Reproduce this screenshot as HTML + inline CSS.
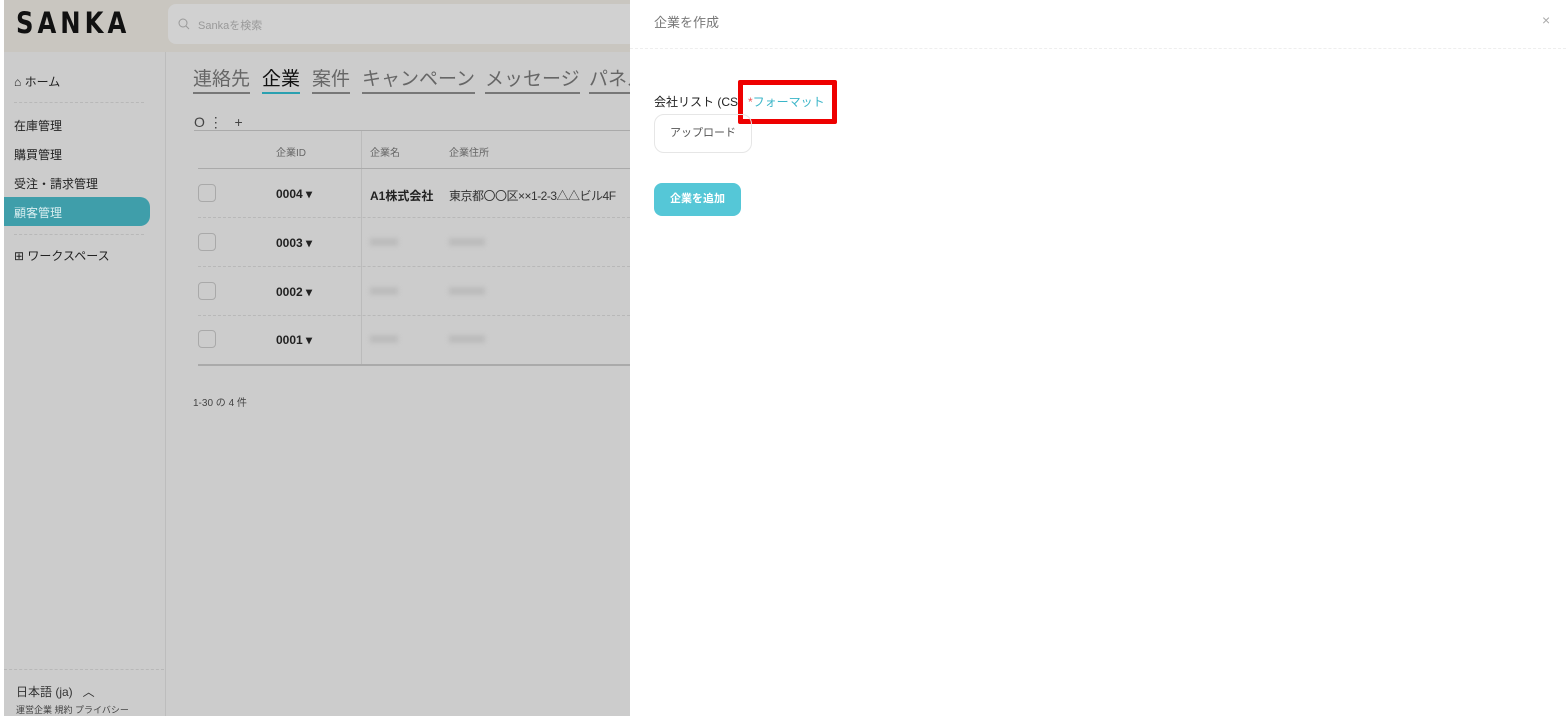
<!DOCTYPE html>
<html><head><meta charset="utf-8"><style>
*{box-sizing:border-box;margin:0;padding:0}
body{width:1566px;height:724px;overflow:hidden;background:#fff;font-family:"Liberation Sans","Noto Sans CJK JP",sans-serif;position:relative}
.clip{position:absolute;left:0;top:0;width:630px;height:716px;overflow:hidden}
.bg{position:absolute;left:4px;top:0;width:626px;height:716px;background:#cccccc}
.hdr{position:absolute;left:4px;top:0;width:626px;height:52px;background:#c9c6c0}
.logo{position:absolute;left:16px;top:8px;font-size:27px;font-weight:bold;letter-spacing:4px;color:#111;font-family:"Liberation Sans Narrow","DejaVu Sans Condensed",sans-serif;transform:scaleY(1.1)}
.search{position:absolute;left:168px;top:4px;width:470px;height:40px;background:#d1d1d1;border-radius:8px;font-size:11px;color:#999;padding:13px 0 0 30px}
.side{position:absolute;left:165px;top:52px;width:1px;height:664px;background:#bdbdbd}
.t{position:absolute;white-space:nowrap}
.nav{font-size:12px;color:#222;left:14px}
.dash{position:absolute;border-top:1px dashed #b8b8b8}
.act{position:absolute;left:4px;top:197px;width:146px;height:29px;background:#3f9eaa;border-radius:0 10px 10px 0}
.tab{font-size:19px;color:#666;top:68px;border-bottom:2px solid #777;line-height:24px}
.cb{position:absolute;left:198px;width:18px;height:18px;border:1px solid #a9a9a9;border-radius:4px}
.id{font-size:12px;font-weight:bold;color:#222;left:276px}
.blur{position:absolute;height:8px;background:#bcbcbc;filter:blur(2px)}
</style></head><body>
<div class="clip">
<div class="bg"></div>
<div class="hdr"></div>
<div class="logo">SANKA</div>
<div class="search"><svg style="position:absolute;left:10px;top:14px" width="12" height="12"><circle cx="5" cy="5" r="4" fill="none" stroke="#999"/><line x1="8" y1="8" x2="11" y2="11" stroke="#999"/></svg>Sankaを検索</div>
<div class="side"></div>
<div class="t nav" style="top:73px">⌂ ホーム</div>
<div class="dash" style="left:14px;top:102px;width:130px"></div>
<div class="t nav" style="top:117px">在庫管理</div>
<div class="t nav" style="top:146px">購買管理</div>
<div class="t nav" style="top:175px">受注・請求管理</div>
<div class="act"></div>
<div class="t nav" style="top:204px;color:#d8eef0">顧客管理</div>
<div class="dash" style="left:14px;top:234px;width:130px"></div>
<div class="t nav" style="top:247px">⊞ ワークスペース</div>
<div class="dash" style="left:4px;top:669px;width:160px"></div>
<div class="t" style="left:16px;top:683px;font-size:12px;color:#333">日本語 (ja) &nbsp;&nbsp;︿</div>
<div class="t" style="left:16px;top:703px;font-size:9px;color:#444">運営企業 規約 プライバシー</div>
<div class="t tab" style="left:193px">連絡先</div>
<div class="t tab" style="left:262px;color:#111;border-color:#2aa0b0">企業</div>
<div class="t tab" style="left:312px">案件</div>
<div class="t tab" style="left:362px">キャンペーン</div>
<div class="t tab" style="left:485px">メッセージ</div>
<div class="t tab" style="left:589px">パネル</div>
<div class="t" style="left:194px;top:114px;font-size:14px;color:#444">O ⋮ &nbsp;&nbsp;+</div>
<div style="position:absolute;left:194px;top:130px;width:436px;height:1px;background:#aaa"></div>
<div style="position:absolute;left:361px;top:131px;width:1px;height:233px;background:#bbb"></div>
<div class="t" style="left:276px;top:144px;font-size:10px;color:#666">企業ID</div>
<div class="t" style="left:370px;top:144px;font-size:10px;color:#666">企業名</div>
<div class="t" style="left:449px;top:144px;font-size:10px;color:#666">企業住所</div>
<div style="position:absolute;left:198px;top:168px;width:432px;height:1px;background:#aaa"></div>
<div class="cb" style="top:184px"></div><div class="t id" style="top:187px">0004 ▾</div>
<div class="t" style="left:370px;top:187px;font-size:12px;font-weight:bold;color:#222">A1株式会社</div>
<div class="t" style="left:449px;top:187px;font-size:12px;color:#333;letter-spacing:-0.5px">東京都〇〇区××1-2-3△△ビル4F</div>
<div class="dash" style="left:198px;top:217px;width:432px"></div>
<div class="cb" style="top:233px"></div><div class="t id" style="top:236px">0003 ▾</div>
<div class="dash" style="left:198px;top:266px;width:432px"></div>
<div class="cb" style="top:282px"></div><div class="t id" style="top:285px">0002 ▾</div>
<div class="dash" style="left:198px;top:315px;width:432px"></div>
<div class="cb" style="top:330px"></div><div class="t id" style="top:333px">0001 ▾</div>
<div style="position:absolute;left:198px;top:364px;width:432px;height:2px;background:#aaa"></div>
<div class="blur" style="left:370px;top:238px;width:28px"></div><div class="blur" style="left:449px;top:238px;width:36px"></div>
<div class="blur" style="left:370px;top:287px;width:28px"></div><div class="blur" style="left:449px;top:287px;width:36px"></div>
<div class="blur" style="left:370px;top:335px;width:28px"></div><div class="blur" style="left:449px;top:335px;width:36px"></div>
<div class="t" style="left:193px;top:394px;font-size:10px;color:#444">1-30 の 4 件</div>
</div>
<div class="t" style="left:654px;top:12px;font-size:13px;color:#777">企業を作成</div>
<div class="t" style="left:1542px;top:12px;font-size:14px;color:#aaa">×</div>
<div class="dash" style="left:630px;top:48px;width:936px;border-color:#eee"></div>
<div class="t" style="left:654px;top:93px;font-size:12px;color:#222">会社リスト (CSV</div>
<div style="position:absolute;left:738px;top:80px;width:99px;height:44px;border:5px solid #ee0000;border-radius:2px;background:#fff"></div>
<div class="t" style="left:748px;top:93px;font-size:12px;color:#3ab5c8"><span style="color:#e55">*</span>フォーマット</div>
<div style="position:absolute;left:654px;top:114px;width:98px;height:39px;border:1px solid #e6e6e6;border-radius:10px;font-size:11px;color:#555;text-align:center;line-height:37px">アップロード</div>
<div style="position:absolute;left:654px;top:183px;width:87px;height:33px;background:#55c7d7;border-radius:8px;font-size:11px;font-weight:bold;color:#fff;text-align:center;line-height:33px">企業を追加</div>
</body></html>
